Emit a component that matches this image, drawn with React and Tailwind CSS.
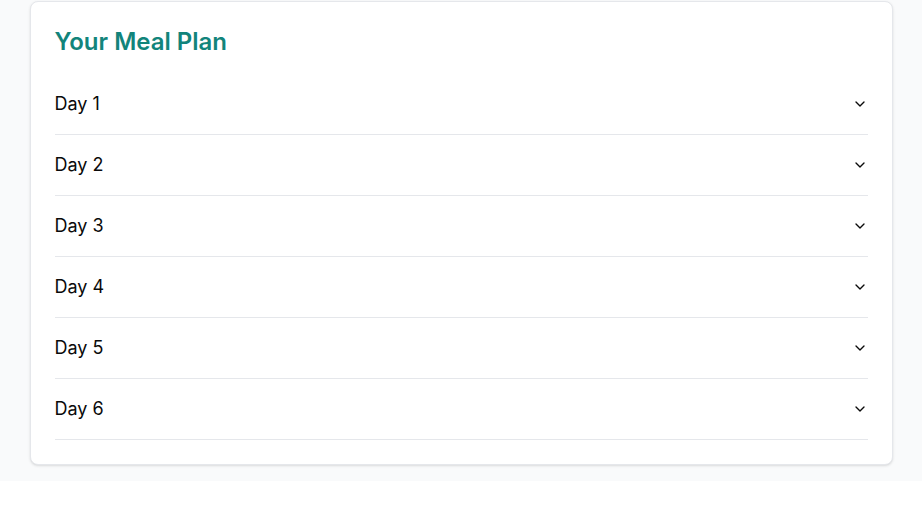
import React from "react";
import { ChevronDown } from "lucide-react";

const days = ["Day 1", "Day 2", "Day 3", "Day 4", "Day 5", "Day 6"];

export default function App() {
  return (
    <div className="bg-gray-50 px-[29.5px] pt-px pb-4" style={{ fontFamily: "Inter, 'Noto Sans', sans-serif" }}>
      <div className="rounded-lg border border-gray-200 bg-white p-6 shadow-sm">
        <h2 className="mb-4 text-2xl font-semibold text-[#12847b]">Your Meal Plan</h2>
        <div>
          {days.map((d) => (
            <div key={d} className="border-b border-gray-200">
              <button className="flex w-full items-center justify-between py-4 text-lg font-normal text-[#0a0a0a]">
                <span>{d}</span>
                <ChevronDown className="h-4 w-4" strokeWidth={2} />
              </button>
            </div>
          ))}
        </div>
      </div>
    </div>
  );
}
